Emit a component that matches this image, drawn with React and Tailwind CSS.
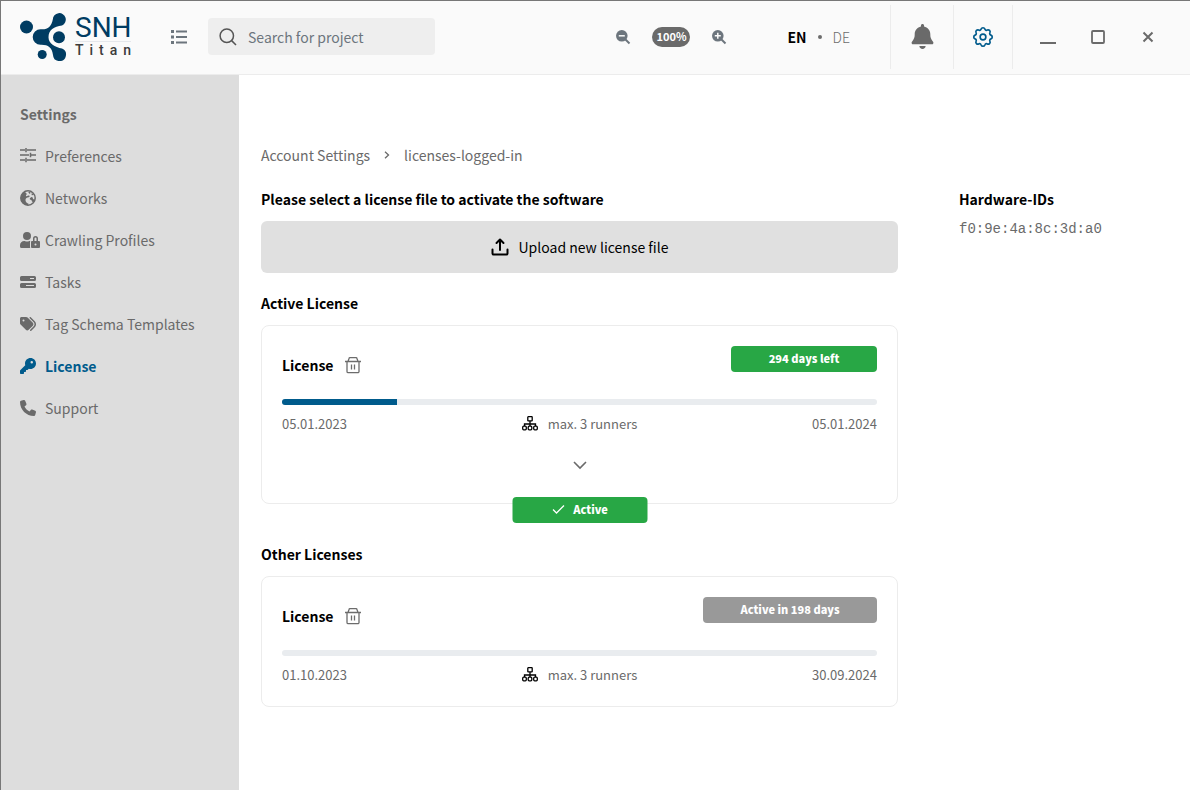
import { useState } from 'react';
import { FaUserLock } from 'react-icons/fa';
import { FaBell, FaKey, FaPhone, FaTags } from 'react-icons/fa6';

const SlidersIcon = () => (
  <svg className="h-4 w-4" viewBox="0 0 16 16" fill="none" stroke="currentColor" strokeWidth="1.5">
    <path d="M0 2h5M7 2h9M0 7h9M11 7h5M0 12h5M7 12h9" />
    <path d="M6 0v4.200M10.500 4.800v4.400M6 9.800v4.400" />
  </svg>
);

const GlobeIcon = () => (
  <svg className="h-4 w-4" viewBox="0 0 16 16" fill="none">
    <circle cx="8" cy="8" r="7.200" stroke="currentColor" strokeWidth="1.500" />
    <path
      fill="currentColor"
      d="M5 1.500C2.500 2.800.800 5.200.800 8c0 4 3 7.200 7.200 7.200l.6-1.400C7 13.200 5.600 12 5.500 10.300c0-1.300.6-2.300 1.800-2.700.8-.3 2-.4 2.300-1.200.2-.6-.6-1-1.200-.8-.8.3-1.500.9-2.200.3C5.500 5.300 6.300 4.400 7 3.900L5.800 3z"
    />
    <path fill="currentColor" d="M8.200 2.200l1.600-.5.800 1-.9 1.200zM11.400 3.400l1.600.4.400 1.300-1.600.2zM9.800 8.200l1.600-1.200 1.300.5.300 1.500 1.600.8-1 2.200-1.500-.3-.7-1.700-1.500-.4z" />
  </svg>
);

const ServerIcon = () => (
  <svg className="h-4 w-4" viewBox="0 0 16 16" fill="currentColor">
    <path fillRule="evenodd" d="M1.5 2h13A1.5 1.5 0 0 1 16 3.500v2A1.500 1.500 0 0 1 14.500 7h-13A1.500 1.500 0 0 1 0 5.500v-2A1.500 1.500 0 0 1 1.500 2zM10 4v1h4V4z" />
    <path fillRule="evenodd" d="M1.500 9h13a1.500 1.500 0 0 1 1.500 1.500v2a1.500 1.500 0 0 1-1.500 1.500h-13A1.500 1.500 0 0 1 0 12.500v-2A1.500 1.500 0 0 1 1.500 9zM6 11v1h8v-1z" />
  </svg>
);

const navItems = [
  { label: 'Preferences', icon: <SlidersIcon /> },
  { label: 'Networks', icon: <GlobeIcon /> },
  { label: 'Crawling Profiles', icon: <FaUserLock size={20} /> },
  { label: 'Tasks', icon: <ServerIcon /> },
  { label: 'Tag Schema Templates', icon: <FaTags size={16} /> },
  { label: 'License', icon: <FaKey size={16} /> },
  { label: 'Support', icon: <FaPhone size={16} /> },
];

const ZoomIcon = ({ plus }) => (
  <svg className="h-4 w-4" viewBox="0 0 16 16" fill="none">
    <circle cx="6.800" cy="6.800" r="5.800" fill="#6c757d" />
    <path d="M10.500 10.500l4 4" stroke="#6c757d" strokeWidth="2" />
    <path d={plus ? 'M3.800 6.800h6M6.800 3.800v6' : 'M3.800 6.800h6'} stroke="#fafafa" strokeWidth="1.500" />
  </svg>
);

const GearIcon = () => (
  <svg className="h-[22px] w-[22px]" viewBox="0 0 20 20" fill="none" stroke="#005b8c" strokeWidth="1.500" strokeLinejoin="round">
    <path d="M17.200 8.300A1.800 1.800 0 0 1 17.200 11.700A1.500 1.500 0 0 0 16.300 13.900A1.800 1.800 0 0 1 13.900 16.300A1.500 1.500 0 0 0 11.700 17.200A1.800 1.800 0 0 1 8.300 17.200A1.500 1.500 0 0 0 6.100 16.300A1.800 1.800 0 0 1 3.700 13.900A1.500 1.500 0 0 0 2.800 11.700A1.800 1.800 0 0 1 2.800 8.300A1.500 1.500 0 0 0 3.700 6.100A1.800 1.800 0 0 1 6.100 3.700A1.500 1.500 0 0 0 8.300 2.800A1.800 1.800 0 0 1 11.700 2.800A1.500 1.500 0 0 0 13.900 3.700A1.800 1.800 0 0 1 16.300 6.100A1.500 1.500 0 0 0 17.200 8.300z" />
    <circle cx="10" cy="10" r="2.600" />
  </svg>
);

const TrashIcon = () => (
  <svg className="h-[18px] w-[18px]" viewBox="0 0 18 18" fill="none" stroke="#6c6c6c" strokeWidth="1.300">
    <path d="M1 5.500h16M3 5.500v10a1.200 1.200 0 0 0 1.200 1.200h9.600a1.200 1.200 0 0 0 1.200-1.200v-10M4 5.500l1-3a1 1 0 0 1 1-.800h6a1 1 0 0 1 1 .800l1 3" />
    <path d="M7.500 8.500v5M10.500 8.500v5" />
  </svg>
);

const RunnersIcon = () => (
  <svg className="h-4 w-4" viewBox="0 0 16 16" fill="none" stroke="#000" strokeWidth="1.300">
    <rect x="5.800" y=".7" width="4.400" height="4.200" rx=".5" />
    <path d="M8 4.900v5M2.500 9.900V8h11v1.900" />
    <rect x=".7" y="10.200" width="3.600" height="3.600" rx="1" />
    <rect x="6.200" y="10.200" width="3.600" height="3.600" rx="1" />
    <rect x="11.700" y="10.200" width="3.600" height="3.600" rx="1" />
  </svg>
);

const Logo = () => (
  <a href="#home" className="flex w-[112px] shrink-0 items-center gap-2">
    <svg className="h-12 w-[47px] shrink-0" viewBox="20 13 47 48" fill="#003c62">
      <circle cx="26.500" cy="27" r="6.500" />
      <circle cx="59" cy="37.300" r="6" />
      <circle cx="42.200" cy="54.500" r="4.500" />
      <path d="M40.500 29.200C47 30 51.500 27 52.800 19.500A6.500 6.500 0 1 1 62 25.500C54 26.500 48.500 30 48.500 37.300C48.500 44 55 47 62 48.600A6.500 6.500 0 1 1 53 55C52 47.500 48 44.500 40.500 44.800A7.800 7.800 0 0 1 40.500 29.200z" />
    </svg>
    <span className="flex w-14 flex-col font-['Roboto',sans-serif]">
      <span className="border-b border-gray-200 text-[28px] leading-[26px] text-[#003c62]">SNH</span>
      <span className="text-sm leading-4 font-medium tracking-[6px] text-[#3c3c3c]">Titan</span>
    </span>
  </a>
);

function Header({ lang, setLang }) {
  return (
    <header className="flex h-[74px] items-center border-b border-[#ececec] bg-[#fafafa] pb-[2px] pl-[19px]">
      <Logo />
      <button aria-label="Toggle menu" className="ml-[39px]">
        <svg className="h-4 w-4" viewBox="0 0 16 16" fill="#6c757d">
          <path d="M0 1h3v3H0zM5 1.500h11v2H5zM0 6.500h3v3H0zM5 7h11v2H5zM0 12h3v3H0zM5 12.500h11v2H5z" />
        </svg>
      </button>
      <label className="ml-[21px] flex h-[37px] w-[227px] items-center gap-[11px] rounded bg-[#eee] px-[11px]">
        <svg className="h-[18px] w-[18px] shrink-0" viewBox="0 0 18 18" fill="none" stroke="#555" strokeWidth="1.500">
          <circle cx="7.800" cy="7.800" r="6.700" />
          <path d="M12.600 12.600l4.400 4.400" />
        </svg>
        <input
          type="text"
          aria-label="Search for project"
          placeholder="Search for project"
          className="w-full min-w-0 bg-transparent leading-5 outline-none placeholder:text-[#6c757d]"
        />
      </label>

      <div className="ml-auto flex items-center gap-[21px]">
        <button aria-label="Zoom out"><ZoomIcon /></button>
        <span className="flex h-5 w-[38px] items-center justify-center rounded-full bg-[#6a6a6a] text-[11px] font-bold text-white">
          100%
        </span>
        <button aria-label="Zoom in"><ZoomIcon plus /></button>
      </div>

      <div className="mr-10 ml-[60px] flex items-center gap-[11px] text-[#6c6c6c]">
        <button onClick={() => setLang('EN')} className={lang === 'EN' ? 'font-bold text-black' : 'font-light'}>EN</button>
        <span className="h-1 w-1 rounded-full bg-[#6c6c6c]" />
        <button onClick={() => setLang('DE')} className={lang === 'DE' ? 'font-bold text-black' : 'font-light'}>DE</button>
      </div>

      <button aria-label="Notifications" className="flex h-16 w-[63px] items-center justify-center border-l border-[#ececec] text-[#6a6a6a]">
        <FaBell size={25} />
      </button>
      <button aria-label="Settings" className="flex h-16 w-[60px] items-center justify-center border-x border-[#ececec]">
        <GearIcon />
      </button>
      <div className="flex items-center pr-[17px] pl-[10px] text-[#6a6a6a]">
        <button aria-label="Minimize" className="flex w-[50px] justify-center">
          <svg className="h-4 w-4" viewBox="0 0 16 16"><path d="M0 13h16v2H0z" fill="currentColor" /></svg>
        </button>
        <button aria-label="Maximize" className="flex w-[50px] justify-center">
          <svg className="h-4 w-4" viewBox="0 0 16 16" fill="none" stroke="currentColor" strokeWidth="1.800">
            <rect x="2" y="2" width="12" height="12" rx="1" />
          </svg>
        </button>
        <button aria-label="Close" className="flex w-[50px] justify-center">
          <svg className="h-4 w-4" viewBox="0 0 16 16" stroke="currentColor" strokeWidth="2">
            <path d="M3.500 3.500l9 9M12.500 3.500l-9 9" />
          </svg>
        </button>
      </div>
    </header>
  );
}

function Sidebar() {
  return (
    <nav className="w-[238px] shrink-0 bg-[#ddd] pt-[29px] pl-[19px] text-[#6a6a6a]">
      <h2 className="mb-[22px] leading-5 font-bold">Settings</h2>
      <ul className="flex flex-col gap-[22px]">
        {navItems.map(({ label, icon }) => (
          <li key={label}>
            <a
              href={`#${label.toLowerCase().replaceAll(' ', '-')}`}
              className={`flex items-center leading-5 ${label === 'License' ? 'font-bold text-[#005b8c]' : ''}`}
            >
              <span className="w-[25px] shrink-0">{icon}</span>
              {label}
            </a>
          </li>
        ))}
      </ul>
    </nav>
  );
}

function LicenseCard({ badge, badgeClass, progress, from, to, active }) {
  return (
    <div className="relative mt-3 rounded-lg border border-[#ececec] p-5">
      <div className="flex h-[37px] items-start justify-between">
        <div className="flex items-center gap-[11px] pt-[9px]">
          <h3 className="leading-5 font-bold">License</h3>
          <button aria-label="Delete license"><TrashIcon /></button>
        </div>
        <span className={`h-[26px] rounded text-center text-[11px] leading-6 font-black text-white ${badgeClass}`}>
          {badge}
        </span>
      </div>
      <div className="mt-4 h-[6px] overflow-hidden rounded-full bg-[#e9ecef]">
        <div className="h-full bg-[#005b8c]" style={{ width: `${progress}%` }} />
      </div>
      <div className="mt-[9px] mb-px grid grid-cols-3 text-[13px] leading-5 text-[#6a6a6a]">
        <span>{from}</span>
        <span className="flex items-center justify-center gap-[10px]">
          <RunnersIcon />
          max. 3 runners
        </span>
        <span className="text-right">{to}</span>
      </div>
      {active && (
        <>
          <button aria-label="Show details" className="mx-auto mt-6 mb-[11px] block">
            <svg className="h-[14px] w-[14px]" viewBox="0 0 14 14" fill="none" stroke="#6a6a6a" strokeWidth="1.600">
              <path d="M1 4l6 6 6-6" />
            </svg>
          </button>
          <span className="absolute -bottom-5 left-1/2 flex h-[26px] w-[135px] -translate-x-1/2 justify-center gap-2 rounded bg-[#28a745] text-[11px] leading-6 font-black text-white">
            <svg className="mt-[5px] h-[14px] w-[14px]" viewBox="0 0 14 14" fill="none" stroke="currentColor" strokeWidth="1.300">
              <path d="M1.500 7.500l3.500 3.500 7.500-7.500" />
            </svg>
            Active
          </span>
        </>
      )}
    </div>
  );
}

export default function App() {
  const [lang, setLang] = useState('EN');

  return (
    <div className="flex min-h-screen flex-col border-t border-l border-[#777] bg-white font-['Noto_Sans_CJK_SC',sans-serif] text-sm text-black">
      <Header lang={lang} setLang={setLang} />
      <div className="flex flex-1">
        <Sidebar />
        <main className="min-w-0 flex-1 pt-[70px] pr-[19px] pb-10 pl-[22px]">
          <div className="flex items-center gap-[13px] leading-5 text-[#6a6a6a]">
            <a href="#account">Account Settings</a>
            <svg className="h-2 w-2" viewBox="0 0 8 8" fill="none" stroke="currentColor" strokeWidth="1.300">
              <path d="M2 .8L5.500 4 2 7.200" />
            </svg>
            <span>licenses-logged-in</span>
          </div>

          <div className="mt-6 flex gap-[61px]">
            <div className="min-w-0 flex-1">
              <h2 className="leading-5 font-bold">Please select a license file to activate the software</h2>
              <button className="mt-3 flex h-[52px] w-full items-center justify-center gap-[10px] rounded-md bg-[#e0e0e0]">
                <svg className="h-[18px] w-[18px]" viewBox="0 0 18 18" fill="none" stroke="#000" strokeWidth="2" strokeLinecap="round" strokeLinejoin="round">
                  <path d="M1.500 11.500v4a1 1 0 0 0 1 1h13a1 1 0 0 0 1-1v-4M9 12V2M5.500 5L9 1.500 12.500 5" />
                </svg>
                Upload new license file
              </button>

              <h2 className="mt-5 leading-5 font-bold">Active License</h2>
              <LicenseCard
                badge="294 days left"
                badgeClass="w-[146px] bg-[#28a745]"
                progress={19.4}
                from="05.01.2023"
                to="05.01.2024"
                active
              />

              <h2 className="mt-10 leading-5 font-bold">Other Licenses</h2>
              <LicenseCard
                badge="Active in 198 days"
                badgeClass="w-[174px] bg-[#999]"
                progress={0}
                from="01.10.2023"
                to="30.09.2024"
              />
            </div>

            <aside className="w-[212px] shrink-0">
              <h2 className="leading-5 font-bold">Hardware-IDs</h2>
              <p className="mt-[10px] font-['Liberation_Mono',monospace] leading-5 text-[#6a6a6a]">f0:9e:4a:8c:3d:a0</p>
            </aside>
          </div>
        </main>
      </div>
    </div>
  );
}
